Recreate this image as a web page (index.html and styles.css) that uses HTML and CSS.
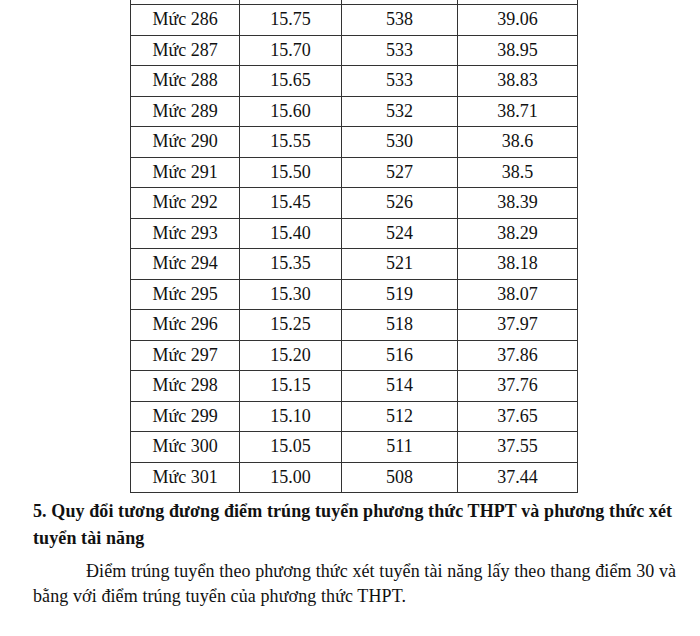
FILE: index.html
```html
<!DOCTYPE html>
<html lang="vi">
<head>
<meta charset="utf-8">
<link rel="stylesheet" href="styles.css">
</head>
<body>
<div class="page">
<table class="grid">
<tbody>
<tr><td></td><td></td><td></td><td></td></tr>
<tr><td>Mức 286</td><td>15.75</td><td>538</td><td>39.06</td></tr>
<tr><td>Mức 287</td><td>15.70</td><td>533</td><td>38.95</td></tr>
<tr><td>Mức 288</td><td>15.65</td><td>533</td><td>38.83</td></tr>
<tr><td>Mức 289</td><td>15.60</td><td>532</td><td>38.71</td></tr>
<tr><td>Mức 290</td><td>15.55</td><td>530</td><td>38.6</td></tr>
<tr><td>Mức 291</td><td>15.50</td><td>527</td><td>38.5</td></tr>
<tr><td>Mức 292</td><td>15.45</td><td>526</td><td>38.39</td></tr>
<tr><td>Mức 293</td><td>15.40</td><td>524</td><td>38.29</td></tr>
<tr><td>Mức 294</td><td>15.35</td><td>521</td><td>38.18</td></tr>
<tr><td>Mức 295</td><td>15.30</td><td>519</td><td>38.07</td></tr>
<tr><td>Mức 296</td><td>15.25</td><td>518</td><td>37.97</td></tr>
<tr><td>Mức 297</td><td>15.20</td><td>516</td><td>37.86</td></tr>
<tr><td>Mức 298</td><td>15.15</td><td>514</td><td>37.76</td></tr>
<tr><td>Mức 299</td><td>15.10</td><td>512</td><td>37.65</td></tr>
<tr><td>Mức 300</td><td>15.05</td><td>511</td><td>37.55</td></tr>
<tr><td>Mức 301</td><td>15.00</td><td>508</td><td>37.44</td></tr>
</tbody>
</table>
<h2 class="heading">5. Quy đổi tương đương điểm trúng tuyển phương thức THPT và phương thức xét tuyển tài năng</h2>
<p class="para">Điểm trúng tuyển theo phương thức xét tuyển tài năng lấy theo thang điểm 30 và bằng với điểm trúng tuyển của phương thức THPT.</p>
</div>
</body>
</html>
```
FILE: styles.css
```css
html, body {
  margin: 0;
  padding: 0;
  background: #ffffff;
}
.page {
  width: 700px;
  height: 636px;
  overflow: hidden;
  font-family: "Liberation Serif", "Times New Roman", serif;
  color: #111;
}
.grid {
  border-collapse: collapse;
  margin-left: 130px;
  margin-top: -26.5px;
  font-size: 18px;
}
.grid tr {
  height: 30.5px;
}
.grid td {
  border: 1px solid #333;
  padding: 0;
  text-align: center;
  vertical-align: middle;
}
.grid td:nth-child(1) { width: 108px; }
.grid td:nth-child(2) { width: 101px; }
.grid td:nth-child(3) { width: 115px; }
.grid td:nth-child(4) { width: 119px; }
.heading {
  margin: 5px 0 0 0;
  padding: 0 10px 0 33px;
  font-size: 18px;
  font-weight: bold;
  line-height: 27px;
  letter-spacing: 0.1px;
}
.para {
  margin: 7px 0 0 0;
  padding: 0 10px 0 33px;
  font-size: 18px;
  line-height: 25px;
  text-indent: 53px;
  letter-spacing: 0.1px;
}
```
